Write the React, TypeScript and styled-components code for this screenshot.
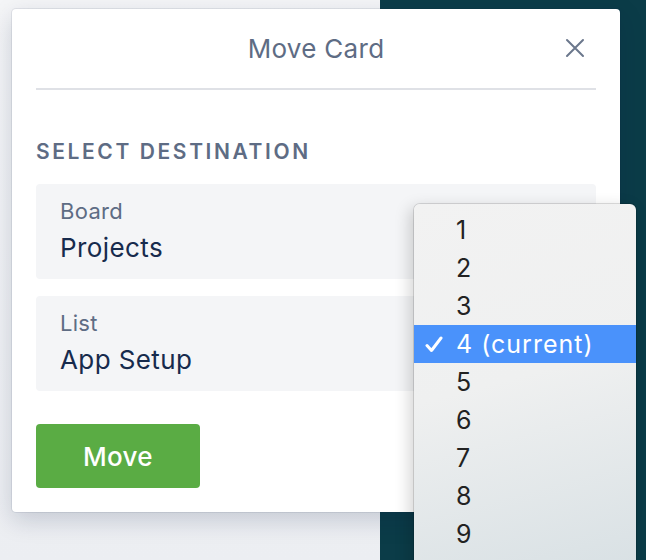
import styled, { createGlobalStyle } from 'styled-components'

const GlobalStyle = createGlobalStyle`
  html, body {
    margin: 0;
    padding: 0;
  }
  body {
    font-family: Inter, "Noto Sans", "Liberation Sans", sans-serif;
    -webkit-font-smoothing: antialiased;
  }
`

const Page = styled.div`
  position: relative;
  width: 646px;
  height: 560px;
  overflow: hidden;
  display: grid;
  grid-template-columns: 380px 1fr;
`

const LeftBackdrop = styled.div`
  background: linear-gradient(180deg, #f4f5f7 0%, #eceef2 100%);
`

const RightBackdrop = styled.div`
  background: #0b3c48;
`

const Modal = styled.div`
  position: absolute;
  left: 12px;
  top: 9px;
  width: 608px;
  height: 503px;
  box-sizing: border-box;
  background: #fff;
  border-radius: 4px;
  box-shadow: 0 0 0 1px rgba(9, 30, 66, 0.08), 0 8px 24px rgba(9, 30, 66, 0.18);
  padding: 0 24px;
  display: flex;
  flex-direction: column;
`

const Header = styled.div`
  position: relative;
  height: 79px;
  display: flex;
  align-items: center;
  justify-content: center;
  border-bottom: 2px solid #dfe1e6;
`

const Title = styled.h2`
  margin: 0;
  font-size: 26px;
  font-weight: 400;
  letter-spacing: 0.3px;
  color: #5e6c84;
`

const CloseButton = styled.button`
  position: absolute;
  right: 10px;
  top: 28px;
  width: 22px;
  height: 22px;
  padding: 0;
  border: none;
  background: none;
  display: flex;
  align-items: center;
  justify-content: center;
`

const SectionTitle = styled.h3`
  margin: 50px 0 20px;
  font-size: 21px;
  font-weight: 600;
  letter-spacing: 2.6px;
  text-transform: uppercase;
  color: #5e6c84;
  line-height: 24px;
`

const Field = styled.div`
  background: #f4f5f7;
  border-radius: 4px;
  height: 95px;
  box-sizing: border-box;
  padding: 13px 24px 0;
  margin-bottom: 17px;
`

const FieldLabel = styled.div`
  font-size: 22px;
  line-height: 28px;
  letter-spacing: 0.3px;
  color: #5e6c84;
`

const FieldValue = styled.div`
  font-size: 26px;
  line-height: 46px;
  letter-spacing: 0.4px;
  color: #172b4d;
`

const MoveButton = styled.button`
  margin-top: 16px;
  width: 164px;
  height: 64px;
  border: none;
  border-radius: 4px;
  background: #5aac44;
  color: #fff;
  font-family: inherit;
  font-size: 26px;
  font-weight: 500;
  letter-spacing: 0.3px;
`

const Dropdown = styled.ul`
  position: absolute;
  left: 414px;
  top: 204px;
  width: 222px;
  height: 380px;
  margin: 0;
  padding: 7px 0 0;
  list-style: none;
  border-radius: 6px;
  background: linear-gradient(165deg, #f2f2f2 0%, #eff0f0 45%, #d6dfe3 100%);
  box-shadow: 0 0 0 1px rgba(0, 0, 0, 0.12), -4px 4px 16px rgba(0, 0, 0, 0.18);
`

const Option = styled.li<{ $selected?: boolean }>`
  height: 38px;
  display: flex;
  align-items: center;
  padding-left: 42px;
  position: relative;
  font-size: 25px;
  letter-spacing: 1px;
  color: ${p => (p.$selected ? '#fff' : '#222')};
  background: ${p => (p.$selected ? '#4a92fb' : 'transparent')};
`

const Check = styled.svg`
  position: absolute;
  left: 11px;
  top: 11px;
`

const options = ['1', '2', '3', '4 (current)', '5', '6', '7', '8', '9']

export default function App() {
  return (
    <>
      <GlobalStyle />
      <Page>
        <LeftBackdrop />
        <RightBackdrop />
        <Modal>
          <Header>
            <Title>Move Card</Title>
            <CloseButton aria-label="Close">
              <svg width="20" height="20" viewBox="0 0 20 20">
                <path d="M2 2 L18 18 M18 2 L2 18" stroke="#6b778c" strokeWidth="2" strokeLinecap="round" />
              </svg>
            </CloseButton>
          </Header>
          <SectionTitle>Select Destination</SectionTitle>
          <Field>
            <FieldLabel>Board</FieldLabel>
            <FieldValue>Projects</FieldValue>
          </Field>
          <Field>
            <FieldLabel>List</FieldLabel>
            <FieldValue>App Setup</FieldValue>
          </Field>
          <div>
            <MoveButton>Move</MoveButton>
          </div>
        </Modal>
        <Dropdown>
          {options.map(o => {
            const selected = o.includes('current')
            return (
              <Option key={o} $selected={selected}>
                {selected && (
                  <Check width="18" height="17" viewBox="0 0 18 17">
                    <path d="M2 9.5 L6.5 14.5 L16 2" fill="none" stroke="#fff" strokeWidth="3" strokeLinecap="round" strokeLinejoin="round" />
                  </Check>
                )}
                {o}
              </Option>
            )
          })}
        </Dropdown>
      </Page>
    </>
  )
}
